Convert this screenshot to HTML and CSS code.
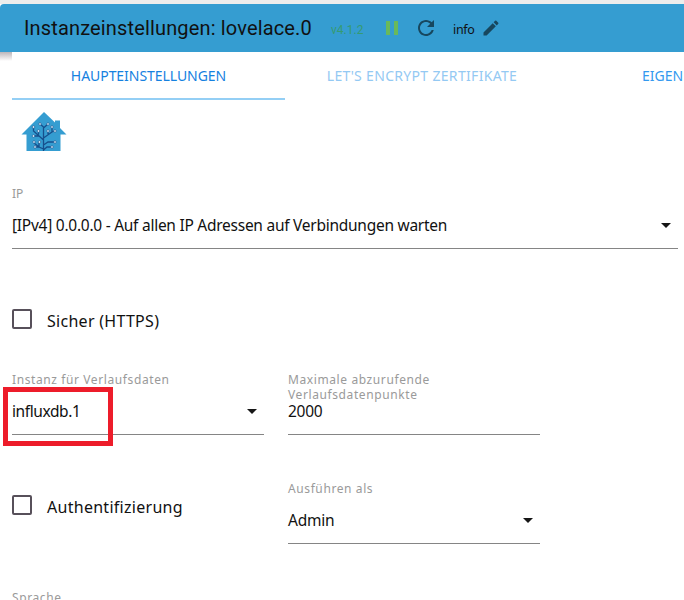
FILE: index.html
```html
<!DOCTYPE html>
<html lang="de">
<head>
<meta charset="utf-8">
<title>Instanzeinstellungen</title>
<link rel="stylesheet" href="styles.css">
</head>
<body>
<header class="bar">
  <h1 class="title">Instanzeinstellungen: lovelace.0</h1>
  <span class="version">v4.1.2</span>
  <svg class="pause" width="14" height="14" viewBox="0 0 14 14"><path d="M1 0h4v14H1zM9 0h4v14H9z" fill="#69b95c"/></svg>
  <svg class="reload" width="24" height="24" viewBox="0 0 24 24"><path d="M17.65 6.35C16.2 4.9 14.21 4 12 4c-4.42 0-7.99 3.58-7.99 8s3.57 8 7.99 8c3.73 0 6.84-2.55 7.73-6h-2.08c-.82 2.33-3.04 4-5.65 4-3.31 0-6-2.69-6-6s2.69-6 6-6c1.66 0 3.14.69 4.22 1.78L13 11h7V4z" fill="#17475e"/></svg>
  <span class="info">info</span>
  <svg class="edit" width="20" height="20" viewBox="0 0 24 24"><path d="M3 17.25V21h3.75L17.81 9.94l-3.75-3.75zM20.71 7.04c.39-.39.39-1.02 0-1.41l-2.34-2.34a.996.996 0 0 0-1.41 0l-1.83 1.83 3.75 3.75z" fill="#17475e"/></svg>
</header>
<nav class="tabs">
  <a class="tab active">HAUPTEINSTELLUNGEN</a>
  <a class="tab muted">LET'S ENCRYPT ZERTIFIKATE</a>
  <a class="tab last">EIGENE</a>
</nav>
<main class="content">
  <svg class="logo" width="46" height="42" viewBox="0 0 46 42">
    <path d="M23 1 34 11.500V9.500H39V17L45.500 23.500H39.500V40H5.500V23.500H0.500Z" fill="#359dd1"/>
    <g fill="none" stroke="#164f8c" stroke-width="1.300">
      <path d="M22.500 40V16L19 13M22.500 17 27 13M22.500 29 12.500 20V17M18 25H13M17.500 23.500V20M22.500 27 31 21V16M31 21 34 20M27 24 27 20M22.500 34 27 31H34M22.500 38 18 36 13 32M18 36H14M22.500 39 26 36H31M18 36 18 32"/>
    </g>
    <g fill="#e3f2fc" stroke="#164f8c" stroke-width=".6">
      <circle cx="19" cy="13" r="1.300"/><circle cx="27" cy="13" r="1.300"/><circle cx="12.500" cy="16" r="1.300"/><circle cx="31" cy="16" r="1.300"/><circle cx="17.500" cy="20" r="1.300"/><circle cx="34" cy="20" r="1.300"/><circle cx="27" cy="20" r="1.300"/><circle cx="12.500" cy="25" r="1.300"/><circle cx="34" cy="31" r="1.300"/><circle cx="13" cy="31" r="1.300"/><circle cx="18.500" cy="31" r="1.300"/><circle cx="14" cy="36" r="1.300"/><circle cx="31" cy="36" r="1.300"/>
    </g>
  </svg>
  <div class="field wide">
    <label class="label">IP</label>
    <div class="value"><span>[IPv4] 0.0.0.0 - Auf allen IP Adressen auf Verbindungen warten</span><i class="arrow"></i></div>
  </div>
  <div class="check https"><i class="box"></i><span>Sicher (HTTPS)</span></div>
  <div class="grid">
    <div class="field">
      <label class="label">Instanz für Verlaufsdaten</label>
      <div class="value"><span class="instance">influxdb.1</span><i class="arrow"></i></div>
      <div class="highlight"></div>
    </div>
    <div class="field">
      <label class="label">Maximale abzurufende<br>Verlaufsdatenpunkte</label>
      <div class="value number"><span>2000</span></div>
    </div>
    <div class="check auth"><i class="box"></i><span>Authentifizierung</span></div>
    <div class="field">
      <label class="label">Ausführen als</label>
      <div class="value"><span>Admin</span><i class="arrow"></i></div>
    </div>
    <label class="label">Sprache</label>
  </div>
</main>
</body>
</html>
```
FILE: styles.css
```css
* { box-sizing: border-box; }
html { overflow: hidden; height: 600px; }
body { margin: 0; height: 600px; overflow: hidden; padding-top: 4px; background: linear-gradient(#ededec 4px, #fff 4px); font-family: "Noto Sans", sans-serif; color: #111; }
.bar { height: 48px; background: #359dd1; border-top-left-radius: 4px; display: flex; align-items: center; padding-left: 24px; position: relative; }
.bar::after { content: ""; position: absolute; left: 0; top: 48px; width: 12px; height: 9px; background: linear-gradient(#bcb6ba, #fff); }
.title { margin: 0 20px 0 0; width: 287px; font: 400 20px/32px Roboto, sans-serif; letter-spacing: .15px; white-space: nowrap; }
.version { width: 34px; font: 12px/16px Roboto, sans-serif; color: #359b72; margin-top: 3px; }
.pause { margin-left: 20px; }
.reload { margin-left: 15px; }
.info { margin-left: 15px; width: 21px; font: 12.500px/16px "Noto Sans", sans-serif; margin-top: 3px; letter-spacing: -.3px; }
.edit { margin-left: 7px; }
.tabs { display: grid; grid-template-columns: 273px 274px 125px; margin-left: 12px; height: 48px; overflow: hidden; }
.tab { height: 48px; text-align: center; font-size: 14px; line-height: 48px; white-space: nowrap; color: #1681df; }
.active { border-bottom: 2px solid #94cff5; letter-spacing: -.05px; }
.muted { color: #94c9f3; letter-spacing: .32px; }
.last { text-align: left; padding-left: 83px; color: #3399ef; overflow: hidden; }
.content { padding: 11px 6px 0 12px; }
.logo { display: block; margin-left: 9px; }
.wide { margin-top: 33px; }
.field { position: relative; height: 63px; border-bottom: 1px solid #858585; }
.label { display: block; font-size: 12px; line-height: 15px; letter-spacing: .6px; color: #9a9a9a; white-space: nowrap; }
.wide .label { letter-spacing: 0; }
.value { display: flex; align-items: center; justify-content: space-between; height: 24px; margin-top: 12px; padding-right: 7px; font-size: 15.500px; letter-spacing: -.26px; white-space: nowrap; color: #111; }
.instance { letter-spacing: -.4px; }
.number { margin-top: -3px; }
.arrow { border: 5px solid transparent; border-top-color: #161616; border-bottom: 0; }
.check { display: flex; align-items: center; gap: 15px; height: 24px; font-size: 16px; letter-spacing: .28px; white-space: nowrap; }
.box { width: 20px; height: 20px; border: 2px solid #57505a; border-radius: 2px; }
.check span { margin-top: 4px; }
.https { margin-top: 58px; }
.grid { display: grid; grid-template-columns: 252px 252px; column-gap: 24px; row-gap: 46px; margin-top: 41px; }
.auth { margin-top: 12px; }
.highlight { position: absolute; left: -9px; top: 15px; width: 110px; height: 59px; border: 5px solid #ed1c2a; }
```
